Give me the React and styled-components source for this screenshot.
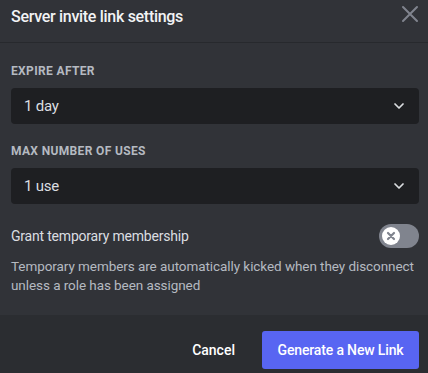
import React, { useState } from 'react';
import styled, { createGlobalStyle } from 'styled-components';

const GlobalStyle = createGlobalStyle`
  html, body {
    margin: 0;
    padding: 0;
    background: #313338;
  }
  body {
    font-family: Roboto, "Noto Sans", sans-serif;
  }
`;

const Modal = styled.div`
  width: 428px;
  height: 373px;
  background: #313338;
  display: flex;
  flex-direction: column;
  overflow: hidden;
`;

const Header = styled.div`
  height: 43px;
  box-sizing: border-box;
  display: flex;
  align-items: flex-start;
  justify-content: space-between;
  padding: 5px 9px 0 11px;
  border-bottom: 1px solid #27292d;
`;

const Title = styled.h1`
  margin: 1px 0 0;
  font-size: 16px;
  line-height: 22px;
  font-weight: 500;
  letter-spacing: -0.3px;
  color: #f2f3f5;
`;

const CloseButton = styled.button`
  background: none;
  border: none;
  padding: 0;
  width: 18px;
  height: 18px;
  display: flex;
  align-items: center;
  justify-content: center;
  cursor: pointer;
`;

const Body = styled.div`
  flex: 1;
  padding: 20px 9px 0 11px;
  display: flex;
  flex-direction: column;
`;

const Field = styled.div`
  display: flex;
  flex-direction: column;
  gap: 9px;
  margin-bottom: 19px;
`;

const Label = styled.label`
  font-size: 12px;
  font-weight: 700;
  text-transform: uppercase;
  letter-spacing: 0.35px;
  color: #b5bac1;
  line-height: 16px;
`;

const Select = styled.div`
  height: 36px;
  box-sizing: border-box;
  background: #1e1f22;
  border-radius: 4px;
  display: flex;
  align-items: center;
  justify-content: space-between;
  padding: 0 12px 0 13px;
  color: #dbdee1;
  font-size: 15px;
  letter-spacing: -0.2px;
  cursor: pointer;
`;

const ToggleRow = styled.div`
  display: flex;
  align-items: center;
  justify-content: space-between;
  margin-top: 1px;
`;

const ToggleLabel = styled.span`
  font-size: 14px;
  letter-spacing: -0.2px;
  color: #dbdee1;
`;

const Track = styled.div`
  width: 40px;
  height: 24px;
  border-radius: 12px;
  background: ${(p) => (p.$on ? '#23a55a' : '#80848e')};
  display: flex;
  align-items: center;
  padding: 0 3px;
  box-sizing: border-box;
  justify-content: ${(p) => (p.$on ? 'flex-end' : 'flex-start')};
  cursor: pointer;
`;

const Knob = styled.div`
  width: 18px;
  height: 18px;
  border-radius: 50%;
  background: #fff;
  display: flex;
  align-items: center;
  justify-content: center;
`;

const Description = styled.p`
  margin: 9px 0 0;
  font-size: 13.5px;
  letter-spacing: -0.07px;
  line-height: 19px;
  color: #b5bac1;
`;

const Footer = styled.div`
  background: #2b2d31;
  height: 58px;
  box-sizing: border-box;
  display: flex;
  justify-content: flex-end;
  align-items: flex-start;
  gap: 27px;
  padding: 16px 9px 0 0;
`;

const TextButton = styled.button`
  background: none;
  border: none;
  height: 38px;
  padding: 0;
  color: #fff;
  font-family: inherit;
  font-size: 14px;
  font-weight: 500;
  cursor: pointer;
`;

const PrimaryButton = styled.button`
  background: #5865f2;
  border: none;
  border-radius: 3px;
  height: 38px;
  width: 157px;
  color: #fff;
  font-family: inherit;
  font-size: 14px;
  font-weight: 500;
  letter-spacing: -0.15px;
  cursor: pointer;
`;

const Chevron = () => (
  <svg width="16" height="16" viewBox="0 0 24 24" fill="none">
    <path d="M6 9l6 6 6-6" stroke="#dbdee1" strokeWidth="2.6" strokeLinecap="round" strokeLinejoin="round" />
  </svg>
);

const App = () => {
  const [temp, setTemp] = useState(false);

  return (
    <>
      <GlobalStyle />
      <Modal>
        <Header>
          <Title>Server invite link settings</Title>
          <CloseButton aria-label="Close">
            <svg width="18" height="18" viewBox="0 0 18 18">
              <path d="M2 2l14 14M16 2L2 16" stroke="#80848e" strokeWidth="2" strokeLinecap="round" />
            </svg>
          </CloseButton>
        </Header>
        <Body>
          <Field>
            <Label>Expire after</Label>
            <Select>
              1 day
              <Chevron />
            </Select>
          </Field>
          <Field>
            <Label>Max number of uses</Label>
            <Select>
              1 use
              <Chevron />
            </Select>
          </Field>
          <ToggleRow>
            <ToggleLabel>Grant temporary membership</ToggleLabel>
            <Track $on={temp} onClick={() => setTemp(!temp)}>
              <Knob>
                <svg width="10" height="10" viewBox="0 0 10 10">
                  <path d="M2 2l6 6M8 2L2 8" stroke="#80848e" strokeWidth="2.2" strokeLinecap="round" />
                </svg>
              </Knob>
            </Track>
          </ToggleRow>
          <Description>
            Temporary members are automatically kicked when they disconnect unless a role has been assigned
          </Description>
        </Body>
        <Footer>
          <TextButton>Cancel</TextButton>
          <PrimaryButton>Generate a New Link</PrimaryButton>
        </Footer>
      </Modal>
    </>
  );
};

export default App;
